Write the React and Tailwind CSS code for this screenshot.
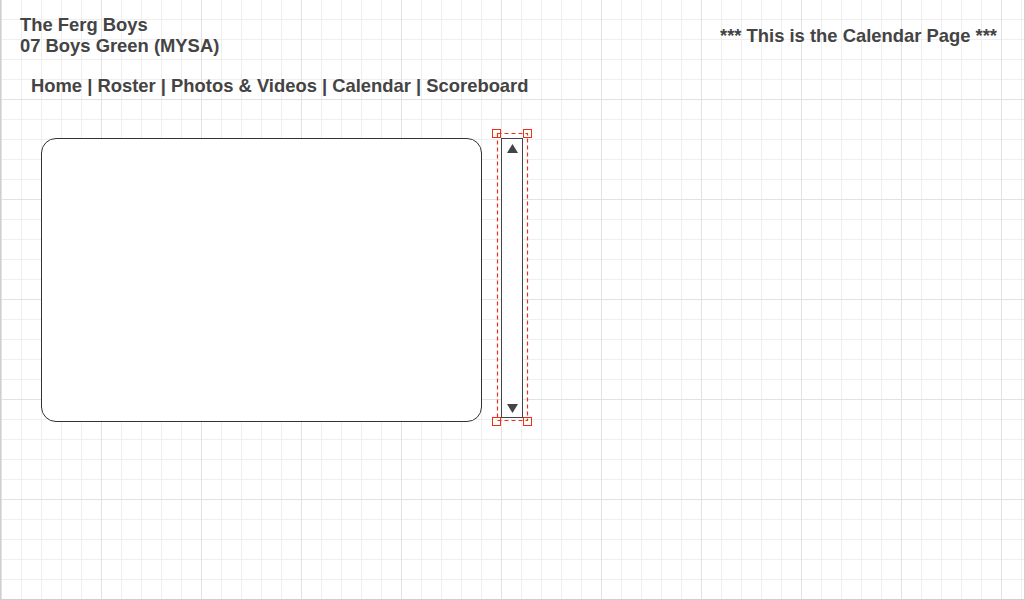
import React from "react";

export default function App() {
  const handles = [
    [0.5, 0.5],
    [31.5, 0.5],
    [0.5, 288.5],
    [31.5, 288.5],
  ];
  return (
    <div className="w-[1025px] h-[600px] overflow-hidden border-l border-r border-b border-[#cfcfcf] bg-white bg-[linear-gradient(to_right,#e2e2e2_1px,transparent_1px),linear-gradient(to_bottom,#e2e2e2_1px,transparent_1px),linear-gradient(to_right,#efefef_1px,transparent_1px),linear-gradient(to_bottom,#efefef_1px,transparent_1px)] bg-size-[100px_100px,100px_100px,20px_20px,20px_20px] bg-position-[0px_-1px] font-['Liberation_Sans',Arial,sans-serif] font-bold text-[#444] text-[18.4px] leading-[21px]">
      <div className="flex justify-between">
        <div className="pl-[19px] pt-[14px]">
          <div>The Ferg Boys</div>
          <div>07 Boys Green (MYSA)</div>
        </div>
        <div className="pt-[25px] pr-[27px]">*** This is the Calendar Page ***</div>
      </div>
      <div className="mt-[19px] pl-[30px] whitespace-pre">Home | Roster | Photos &amp; Videos | Calendar | Scoreboard</div>
      <div className="flex items-start mt-[33px] pl-[40px]">
        <div className="mt-[9px] w-[441px] h-[284px] rounded-[15px] border border-[#333] bg-white" />
        <div className="relative ml-[10px] w-[41px] h-[298px] p-[9px] pr-[10px]">
          <div className="w-[22px] h-[280px] border border-[#444] bg-white flex flex-col items-center justify-between pt-[5px] pb-[4px]">
            <svg width="11" height="9" viewBox="0 0 11 9"><path d="M5.5 0 L11 9 L0 9 Z" fill="#444" /></svg>
            <svg width="11" height="9" viewBox="0 0 11 9"><path d="M0 0 L11 0 L5.5 9 Z" fill="#444" /></svg>
          </div>
          <svg className="absolute inset-0" width="41" height="298" viewBox="0 0 41 298">
            <rect x="5.5" y="4.5" width="30" height="287" fill="none" stroke="#e8321a" strokeWidth="1.2" strokeDasharray="4 3" />
            {handles.map(([x, y], i) => (
              <rect key={i} x={x} y={y} width="8" height="8" fill="none" stroke="#e8321a" strokeWidth="1" />
            ))}
          </svg>
        </div>
      </div>
    </div>
  );
}
